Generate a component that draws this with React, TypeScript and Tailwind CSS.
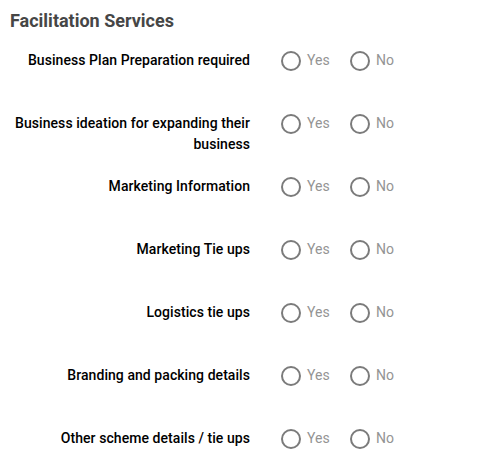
import React, { useState } from 'react';

const services = [
  'Business Plan Preparation required',
  'Business ideation for expanding their business',
  'Marketing Information',
  'Marketing Tie ups',
  'Logistics tie ups',
  'Branding and packing details',
  'Other scheme details / tie ups',
];

const RadioOption: React.FC<{ label: string; checked: boolean; onSelect: () => void; className?: string }> = ({
  label,
  checked,
  onSelect,
  className,
}) => (
  <label className={`flex items-center gap-[6px] cursor-pointer ${className ?? ''}`} onClick={onSelect}>
    <span className="w-[20px] h-[20px] rounded-full border-2 border-[#7b7b7b] flex items-center justify-center">
      {checked && <span className="w-[10px] h-[10px] rounded-full bg-[#7b7b7b]" />}
    </span>
    <span className="text-[14px] text-[#949494]">{label}</span>
  </label>
);

export default function App() {
  const [answers, setAnswers] = useState<Record<number, 'yes' | 'no'>>({});

  return (
    <div className="px-[10px] pt-[9px] bg-white" style={{ fontFamily: 'Roboto, "Liberation Sans", sans-serif' }}>
      <h2 className="text-[18px] leading-[24px] font-bold text-[#464646]">Facilitation Services</h2>
      <div className="mt-[17px]">
        {services.map((s, i) => (
          <div key={s} className="flex items-start h-[63px]">
            <div className="w-[240px] text-right text-[14px] leading-[21px] font-medium tracking-[0.06px] text-black">{s}</div>
            <div className="flex items-center h-[21px] ml-[31px]">
              <RadioOption
                label="Yes"
                className="w-[69px]"
                checked={answers[i] === 'yes'}
                onSelect={() => setAnswers(a => ({ ...a, [i]: 'yes' }))}
              />
              <RadioOption
                label="No"
                checked={answers[i] === 'no'}
                onSelect={() => setAnswers(a => ({ ...a, [i]: 'no' }))}
              />
            </div>
          </div>
        ))}
      </div>
    </div>
  );
}
